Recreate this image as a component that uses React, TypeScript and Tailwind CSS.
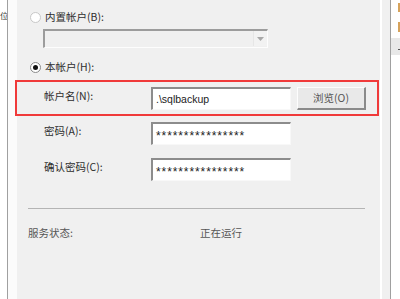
import React from 'react';

const font = { fontFamily: '"Noto Sans CJK SC", "Noto Sans", sans-serif' };

function Radio({ checked = false, disabled = false }: { checked?: boolean; disabled?: boolean }) {
  return (
    <span
      className={`flex items-center justify-center w-[11px] h-[11px] rounded-full border bg-white ${
        disabled ? 'border-[#c8c8c8]' : 'border-[#8a8a8a]'
      }`}
    >
      {checked && <span className="w-[5px] h-[5px] rounded-full bg-[#111]" />}
    </span>
  );
}

function Field({ value, mask = false }: { value: string; mask?: boolean }) {
  return (
    <div className="w-[140px] h-[23px] border-t-2 border-l-2 border-t-[#8c8c8c] border-l-[#8c8c8c] border-b border-r border-b-[#f8f8f8] border-r-[#f8f8f8] bg-white flex items-center pl-[3px]">
      <span
        className={`text-[#222] leading-none ${mask ? 'text-[12px] tracking-[0.9px] pt-[4px]' : 'text-[10.5px]'}`}
        style={{ fontFamily: '"Liberation Sans", Arial, sans-serif' }}
      >
        {value}
      </span>
    </div>
  );
}

function Row({ label, children, mt }: { label: string; children: React.ReactNode; mt: string }) {
  return (
    <div className={`flex items-start ${mt} ml-[27px]`}>
      <div className="w-[107px] pt-[2px] text-[10.5px] leading-[14px] text-[#2e2e2e]">{label}</div>
      {children}
    </div>
  );
}

export default function App() {
  return (
    <div className="relative w-[400px] h-[299px] flex overflow-hidden bg-white" style={font}>
      {/* left edge of the neighbouring window */}
      <div className="w-[7px]">
        <div className="mt-[10px] ml-[0px] text-[8px] leading-[11px] text-[#333]">位</div>
      </div>
      <div className="w-px bg-[#a0a0a0]" />
      <div className="w-[9px] bg-[#fbfbfb]" />

      {/* main panel */}
      <div className="w-[363px] bg-[#f0f0f0] flex flex-col">
        <div className="flex items-center h-[14px] mt-[10px] ml-[13px]">
          <Radio disabled />
          <span className="ml-[4px] text-[10.5px] leading-[14px] text-[#2e2e2e]">内置帐户(B):</span>
        </div>

        <div className="mt-[5px] ml-[26px] w-[225px] h-[19px] border-t-2 border-l-2 border-t-[#9c9c9c] border-l-[#9c9c9c] border-b border-r border-b-[#fdfdfd] border-r-[#fdfdfd] bg-[#f0f0f0] flex justify-end">
          <div className="w-[14px] h-[15px] border-l border-[#e6e6e6] bg-[#f2f2f2] flex items-center justify-center">
            <svg width="7" height="4" viewBox="0 0 7 4">
              <path d="M0 0 H7 L3.5 4 Z" fill="#a8a8a8" />
            </svg>
          </div>
        </div>

        <div className="flex items-center h-[14px] mt-[12px] ml-[13px]">
          <Radio checked />
          <span className="ml-[4px] text-[10.5px] leading-[14px] text-[#2e2e2e]">本帐户(H):</span>
        </div>

        <Row label="帐户名(N):" mt="mt-[13px]">
          <Field value=".\sqlbackup" />
          <button className="ml-[6px] w-[69px] h-[23px] border-t border-l border-t-[#fdfdfd] border-l-[#fdfdfd] border-b-2 border-r-2 border-b-[#8a8a8a] border-r-[#8a8a8a] bg-[#e9e9e9] text-[10.5px] leading-none text-[#555]">
            浏览(O)
          </button>
        </Row>

        <Row label="密码(A):" mt="mt-[12px]">
          <Field value="****************" mask />
        </Row>

        <Row label="确认密码(C):" mt="mt-[13px]">
          <Field value="****************" mask />
        </Row>

        <div className="mt-[27px] ml-[11px] w-[337px] h-px bg-[#b4b4b4]" />

        <div className="flex mt-[17px] ml-[11px] text-[10.5px] leading-[14px] text-[#555]">
          <span className="w-[172px]">服务状态:</span>
          <span>正在运行</span>
        </div>
      </div>

      {/* right edge */}
      <div className="w-[2px] bg-white" />
      <div className="w-[8px] bg-[#f0f0f0]" />
      <div className="w-px bg-[#a0a0a0]" />
      <div className="w-[9px] bg-white flex flex-col items-end">
        <div className="mt-[3px] w-[2px] h-[9px] bg-[#d6a35c]" />
        <div className="mt-[10px] w-[2px] h-[10px] bg-[#d6a35c]" />
        <div className="mt-[6px] w-full h-[17px] bg-[#e8e8e8] flex items-end justify-end pb-[5px]">
          <div className="w-[2px] h-px bg-[#555]" />
        </div>
      </div>

      {/* red annotation box */}
      <div className="absolute left-[15px] top-[80px] w-[364px] h-[36px] border-2 border-[#f03a3a] pointer-events-none" />
    </div>
  );
}
